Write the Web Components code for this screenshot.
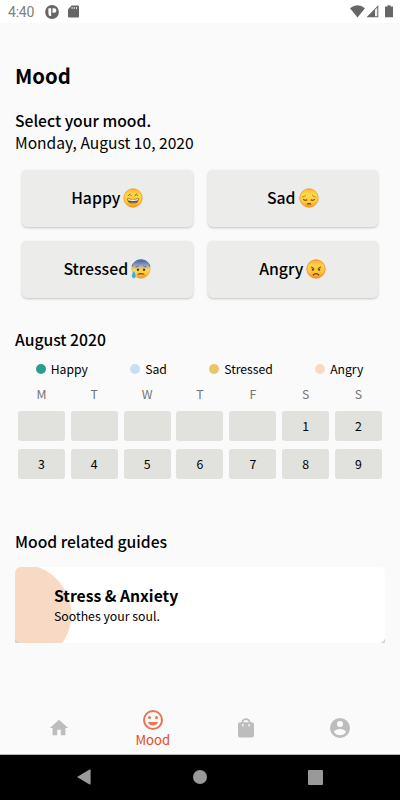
<!DOCTYPE html>
<html lang="en">
<head>
<meta charset="utf-8">
<title>Mood</title>
<style>
html,body{margin:0;height:100%;background:#fafafa}
body{font-family:"Noto Sans CJK JP","Noto Sans",sans-serif;color:#000;overflow:hidden}
</style>
</head>
<body>
<mood-app></mood-app>
<script>
function define(name, markup) {
  const t = document.createElement('template');
  t.innerHTML = markup;
  customElements.define(name, class extends HTMLElement {
    constructor() {
      super();
      this.attachShadow({ mode: 'open' }).append(t.content.cloneNode(true));
    }
  });
}

define('status-bar', `
<style>
:host{display:flex;align-items:center;height:23px;background:#fff;box-sizing:border-box;padding:0 7px 0 8px;font:400 14px/23px Roboto,sans-serif;color:#808080}
span{width:37px;letter-spacing:-.2px;padding-top:1px}
svg{display:block;fill:#666}
.gap{flex:1}
</style>
<span>4:40</span>
<svg width="14" height="14" viewBox="0 0 14 14"><circle cx="7" cy="7" r="6.9"/><path d="M3.400 3.200h2.800v7.800H4.600q-1.200-1-1.200-2.600zM7.500 3.200h1.600a2.300 2.300 0 0 1 0 4.600H7.500z" fill="#fff"/></svg>
<svg width="11" height="13" viewBox="0 0 11 13" style="margin-left:9px"><path d="M3.7.5H10q1 0 1 1v10q0 1-1 1H1q-1 0-1-1V4.2z"/><path d="M3.6 2h1v2h-1zM5.800 2h1v2h-1zM8 2h1v2H8z" fill="#ddd"/></svg>
<div class="gap"></div>
<svg width="15" height="13" viewBox="0 0 15 13"><path d="M0 3.200Q7.500-2.600 15 3.200L7.500 12.400z"/></svg>
<svg width="13" height="13" viewBox="0 0 13 13" style="margin:0 6px 0 1px"><path d="M.5 12.300L12.300.3v12z"/><path d="M9 4.800l2.300-2.300v8.800H9z" fill="#eee"/></svg>
<svg width="8" height="13" viewBox="0 0 8 13"><path d="M2.500.3h3v1.200H8v10.800H0V1.500h2.500z"/></svg>`);

define('mood-face', `
<style>
:host{display:block;width:20px;height:20px}
svg{display:none;width:20px;height:20px}
:host([kind=happy]) .happy,:host([kind=sad]) .sad,:host([kind=stressed]) .stressed,:host([kind=angry]) .angry{display:block}
</style>
<svg class="happy" viewBox="0 0 20 20"><defs><linearGradient id="a" x2="0" y2="1"><stop stop-color="#ffb42a"/><stop offset=".3" stop-color="#ffd544"/><stop offset=".7" stop-color="#ffcb35"/><stop offset="1" stop-color="#f79a1e"/></linearGradient></defs><circle cx="10" cy="10" r="9.2" fill="url(#a)" stroke="#ef962c" stroke-width=".8"/><path d="M5.2 7.7Q6.7 4.8 8.1 7.7M11.8 7.7Q13.3 4.8 14.8 7.7" fill="none" stroke="#79531c" stroke-width="1"/><path d="M4.2 10.3q5.8 1.2 11.6 0Q15.5 16 10 16T4.2 10.3z" fill="#6b5430"/><path d="M5 11q5 1 10 0l-.4 1.6q-4.6.8-9.2 0z" fill="#fff"/><path d="M6.4 14.4q3.6.9 7.2 0Q12.300 15.700 10 15.700T6.400 14.400z" fill="#ddb5a0"/></svg>
<svg class="sad" viewBox="0 0 20 20"><defs><linearGradient id="b" x2="0" y2="1"><stop stop-color="#ffb52b"/><stop offset=".3" stop-color="#ffda50"/><stop offset=".7" stop-color="#ffcb35"/><stop offset="1" stop-color="#f79a1e"/></linearGradient></defs><circle cx="10" cy="10" r="9.2" fill="url(#b)" stroke="#ef962c" stroke-width=".8"/><path d="M3.200 9.200q2.400-.4 3.700-2.300M16.800 9.200q-2.400-.4-3.700-2.300" fill="none" stroke="#a36d19" stroke-width=".8"/><path d="M4.200 11.400q2 1.600 4 .3M11.800 11.700q2 1.300 4-.3M8 16.200q2-1.200 4 0" fill="none" stroke="#604316" stroke-width="1.100"/></svg>
<svg class="stressed" viewBox="0 0 20 20"><defs><linearGradient id="c" x2="0" y2="1"><stop stop-color="#375aaf"/><stop offset=".2" stop-color="#718bc5"/><stop offset=".45" stop-color="#d6c78a"/><stop offset=".53" stop-color="#ffd746"/><stop offset=".75" stop-color="#ffc934"/><stop offset="1" stop-color="#f4951d"/></linearGradient></defs><circle cx="10" cy="10" r="9.200" fill="url(#c)" stroke="#e99a3b" stroke-width=".5"/><path d="M1 7.500A9.400 9.400 0 0 1 19 7.500" fill="none" stroke="#345db0" stroke-width=".9"/><path d="M4.600 8q2-.2 3-1.500M15.400 8q-2-.2-3-1.500" fill="none" stroke="#665c51" stroke-width=".8"/><circle cx="7" cy="10.700" r="1.200" fill="#54401e"/><circle cx="13" cy="10.700" r="1.200" fill="#54401e"/><path d="M6.500 16.300l.5-1.500q3-1.700 6 0l.5 1.500-1.500-.7q-2-.9-4 0z" fill="#71491a"/><path d="M2.900 11.300q2.200 3.200 2.200 5.400c0 3.600-4.500 3.600-4.500 0q0-2.200 2.300-5.400z" fill="#3eaadd" stroke="#dcf5fc" stroke-width=".6"/></svg>
<svg class="angry" viewBox="0 0 20 20"><defs><linearGradient id="d" x2="0" y2="1"><stop stop-color="#fdaa2b"/><stop offset=".3" stop-color="#ffd347"/><stop offset=".65" stop-color="#ffc638"/><stop offset="1" stop-color="#f4921d"/></linearGradient></defs><circle cx="10" cy="10" r="9.200" fill="url(#d)" stroke="#f18d37" stroke-width=".9"/><path d="M4.900 8q2.100.3 3.500 2M15.100 8q-2.100.3-3.500 2" fill="none" stroke="#6d4716" stroke-width="1"/><circle cx="6.800" cy="10.700" r="1.100" fill="#5a3b16"/><circle cx="13.200" cy="10.700" r="1.100" fill="#5a3b16"/><path d="M7 16.200q3-3.200 6 0" fill="none" stroke="#634119" stroke-width="1.300"/></svg>`);

define('mood-button', `
<style>
:host{display:flex;align-items:center;justify-content:center;gap:3px;height:56.500px;border-radius:5px;background:#ececea;box-shadow:0 1px 2.500px rgba(0,0,0,.22);font-weight:500;font-size:15.800px;line-height:22px}
</style><slot></slot>`);

define('legend-item', `
<style>
:host{display:flex;align-items:center;gap:5px;font-size:12.200px;line-height:18px}
i{width:10px;height:10px;border-radius:50%;background:var(--dot)}
</style><i></i><slot></slot>`);

define('mood-calendar', `
<style>
:host{display:grid;grid-template-columns:repeat(7,47px);justify-content:space-around;row-gap:8px;text-align:center;font-size:12.300px}
</style><slot></slot>`);
define('week-day', `<style>:host{display:block;height:18px;line-height:18px;color:#757575}</style><slot></slot>`);
define('day-cell', `<style>:host{display:block;height:30px;line-height:30px;border-radius:3px;background:#e1e2dd}</style><slot></slot>`);

define('guide-card', `
<style>
:host{display:flex;flex-direction:column;box-sizing:border-box;height:75.500px;padding:18px 0 0 39px;position:relative;overflow:hidden;border-radius:6px 6px 1px 1px;background:#fff}
.shape{position:absolute;inset:0;width:370px;height:76px}
b,span{position:relative;white-space:nowrap}
b{font-size:15.700px;line-height:22px}
span{font-size:12.300px;line-height:18px;margin-top:-.5px}
</style>
<svg class="shape" viewBox="0 0 370 76"><circle cx="6" cy="47.500" r="50.300" fill="#f8d9c4"/><path d="M0 71q1 4 5 5H0zM370 71q-1 4-5 5h5z" fill="#d2d2d2"/></svg>
<b><slot name="title"></slot></b><span><slot></slot></span>`);

define('tab-item', `
<style>
:host{display:flex;flex-direction:column;align-items:center;justify-content:center;flex:1;fill:#bdbdbd;color:#e64a19;font-size:13.100px;line-height:16px}
</style><slot></slot>`);
define('tab-bar', `<style>:host{display:flex;height:54px;padding:1px 13.500px 0 12.500px;box-sizing:border-box;border-bottom:1px solid #b8b8b8}</style><slot></slot>`);

define('system-nav', `
<style>
:host{display:flex;align-items:center;justify-content:space-between;height:45px;background:#000;box-sizing:border-box;padding:0 77px 1px}
svg{display:block;fill:#999}
</style>
<svg width="14" height="16" viewBox="0 0 14 16"><path d="M12.600.6q1-.4 1 .6v13.600q0 1-1 .6L0 8z"/></svg>
<svg width="14" height="14" viewBox="0 0 14 14" style="margin-left:1px"><circle cx="7" cy="7" r="7"/></svg>
<svg width="15" height="15" viewBox="0 0 15 15"><rect width="15" height="15" rx="1"/></svg>`);

define('mood-app', `
<style>
:host{display:flex;flex-direction:column;height:800px;width:400px;background:#fafafa}
main{flex:1;padding:37px 15px 0}
h1,h2,p{margin:0;line-height:22px;white-space:nowrap}
h1{font-size:20.300px;line-height:30px;font-weight:700}
h2{font-size:15.700px;font-weight:500}
p{font-size:15.600px;line-height:21px}
.select{margin-top:20px}
.moods{display:grid;grid-template-columns:170.500px 170.500px;gap:14.500px 15px;padding:17px 7px 0}
.month{margin-top:31.500px}
.legend{display:flex;justify-content:space-around;margin:8.500px 0 7px}
.legend *{margin-left:-1px}
.guides{margin-top:52px}
guide-card{margin-top:14.500px}
</style>
<status-bar></status-bar>
<main>
<h1>Mood</h1>
<h2 class="select">Select your mood.</h2>
<p>Monday, August 10, 2020</p>
<div class="moods">
<mood-button><span>Happy</span><mood-face kind="happy"></mood-face></mood-button>
<mood-button><span>Sad</span><mood-face kind="sad"></mood-face></mood-button>
<mood-button><span>Stressed</span><mood-face kind="stressed"></mood-face></mood-button>
<mood-button><span>Angry</span><mood-face kind="angry"></mood-face></mood-button>
</div>
<h2 class="month">August 2020</h2>
<div class="legend">
<legend-item style="--dot:#2a9d8f">Happy</legend-item><legend-item style="--dot:#c6dff3">Sad</legend-item><legend-item style="--dot:#e9c46a">Stressed</legend-item><legend-item style="--dot:#f8d9c4">Angry</legend-item>
</div>
<mood-calendar>
<week-day>M</week-day><week-day>T</week-day><week-day>W</week-day><week-day>T</week-day><week-day>F</week-day><week-day>S</week-day><week-day>S</week-day>
<day-cell></day-cell><day-cell></day-cell><day-cell></day-cell><day-cell></day-cell><day-cell></day-cell><day-cell>1</day-cell><day-cell>2</day-cell>
<day-cell>3</day-cell><day-cell>4</day-cell><day-cell>5</day-cell><day-cell>6</day-cell><day-cell>7</day-cell><day-cell>8</day-cell><day-cell>9</day-cell>
</mood-calendar>
<h2 class="guides">Mood related guides</h2>
<guide-card><span slot="title">Stress &amp; Anxiety</span>Soothes your soul.</guide-card>
</main>
<tab-bar>
<tab-item><svg width="22" height="22" viewBox="0 0 24 24"><path d="M10 20v-6h4v6h5v-8h3L12 3 2 12h3v8z"/></svg></tab-item>
<tab-item><svg width="24" height="24" viewBox="0 0 24 24" style="fill:#ec7354"><path d="M12 2a10 10 0 1 0 0 20 10 10 0 0 0 0-20zm0 18a8 8 0 1 1 0-16 8 8 0 0 1 0 16zM8.500 8a1.500 1.500 0 1 0 0 3 1.500 1.500 0 0 0 0-3zm7 0a1.500 1.500 0 1 0 0 3 1.500 1.500 0 0 0 0-3zM7 14h10c-.6 2.100-2.500 3.500-5 3.500S7.600 16.100 7 14z"/></svg><span>Mood</span></tab-item>
<tab-item><svg width="22" height="22" viewBox="0 0 22 22"><path fill-rule="evenodd" d="M6.500 5.200C6.500 0 15.500 0 15.500 5.200H17q2 0 2 2V18.500q0 2-2 2H5q-2 0-2-2V7.200q0-2 2-2zm1.700 0h5.600C13.200 2.300 8.800 2.300 8.200 5.200zM7.200 7v2q0 .6.700.6t.7-.6V7zM13.400 7v2q0 .6.700.6t.7-.6V7z"/></svg></tab-item>
<tab-item><svg width="24" height="24" viewBox="0 0 24 24"><path d="M12 2a10 10 0 1 0 0 20 10 10 0 0 0 0-20zm0 3a3 3 0 1 1 0 6 3 3 0 0 1 0-6zm0 14.200A7.200 7.200 0 0 1 6 16c0-2 4-3.100 6-3.100s6 1.100 6 3.100a7.200 7.200 0 0 1-6 3.200z"/></svg></tab-item>
</tab-bar>
<system-nav></system-nav>`);
</script>
</body>
</html>
